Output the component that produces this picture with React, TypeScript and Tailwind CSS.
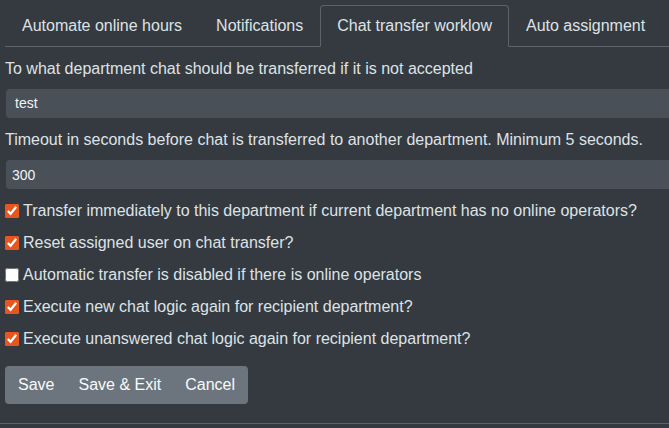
import { useState } from 'react';

const tabs = ['Automate online hours', 'Notifications', 'Chat transfer worklow', 'Auto assignment'];

const options = [
  { label: 'Transfer immediately to this department if current department has no online operators?', checked: true },
  { label: 'Reset assigned user on chat transfer?', checked: true },
  { label: 'Automatic transfer is disabled if there is online operators', checked: false },
  { label: 'Execute new chat logic again for recipient department?', checked: true },
  { label: 'Execute unanswered chat logic again for recipient department?', checked: true },
];

export default function App() {
  const [active, setActive] = useState(2);
  const [checks, setChecks] = useState(options.map(o => o.checked));

  return (
    <div className="w-[669px] h-[428px] overflow-hidden bg-[#343a40] text-[#dee2e6] font-['Liberation_Sans',Arial,sans-serif] text-[16px] leading-6 flex flex-col">
      <div className="pl-[5px] pt-[5px] w-[700px] flex-1">
        {/* Tabs */}
        <ul className="flex border-b border-[#5c636a]">
          {tabs.map((t, i) => (
            <li key={t} className="-mb-px">
              <button
                onClick={() => setActive(i)}
                className={
                  'px-4 py-2 border rounded-t-[4px] whitespace-nowrap ' +
                  (i === active
                    ? 'border-[#5c636a] border-b-[#343a40] bg-[#343a40]'
                    : 'border-transparent')
                }
              >
                {t}
              </button>
            </li>
          ))}
        </ul>

        {/* Form */}
        <div className="pt-[10px]">
          <label className="block mb-2">To what department chat should be transferred if it is not accepted</label>
          <div className="ml-px h-[29px] bg-[#495057] rounded-[4px] pl-[9px] text-[14px] leading-[29px] text-[#f1f3f5]">test</div>

          <label className="block mt-[10px] mb-2">Timeout in seconds before chat is transferred to another department. Minimum 5 seconds.</label>
          <input
            readOnly
            value="300"
            className="ml-px block w-[calc(100%-1px)] h-[29px] bg-[#495057] rounded-[4px] pl-[6px] text-[14px] text-[#f1f3f5] outline-none"
          />

          <div className="mt-[10px] flex flex-col gap-2">
            {options.map((o, i) => (
              <label key={o.label} className="flex items-center gap-1 whitespace-nowrap">
                <input
                  type="checkbox"
                  checked={checks[i]}
                  onChange={() => setChecks(c => c.map((v, j) => (j === i ? !v : v)))}
                  className="m-0 w-[14px] h-[14px] accent-[#e8561e]"
                />
                <span>{o.label}</span>
              </label>
            ))}
          </div>

          <div className="mt-[15px] inline-flex px-px bg-[#6c757d] rounded-[4px] text-[#f8f9fa]">
            <button className="px-3 py-[7px]">Save</button>
            <button className="px-3 py-[7px]">Save &amp; Exit</button>
            <button className="px-3 py-[7px]">Cancel</button>
          </div>
        </div>
      </div>
      <div className="h-[5px] border-t border-[#5c636a]" />
    </div>
  );
}
